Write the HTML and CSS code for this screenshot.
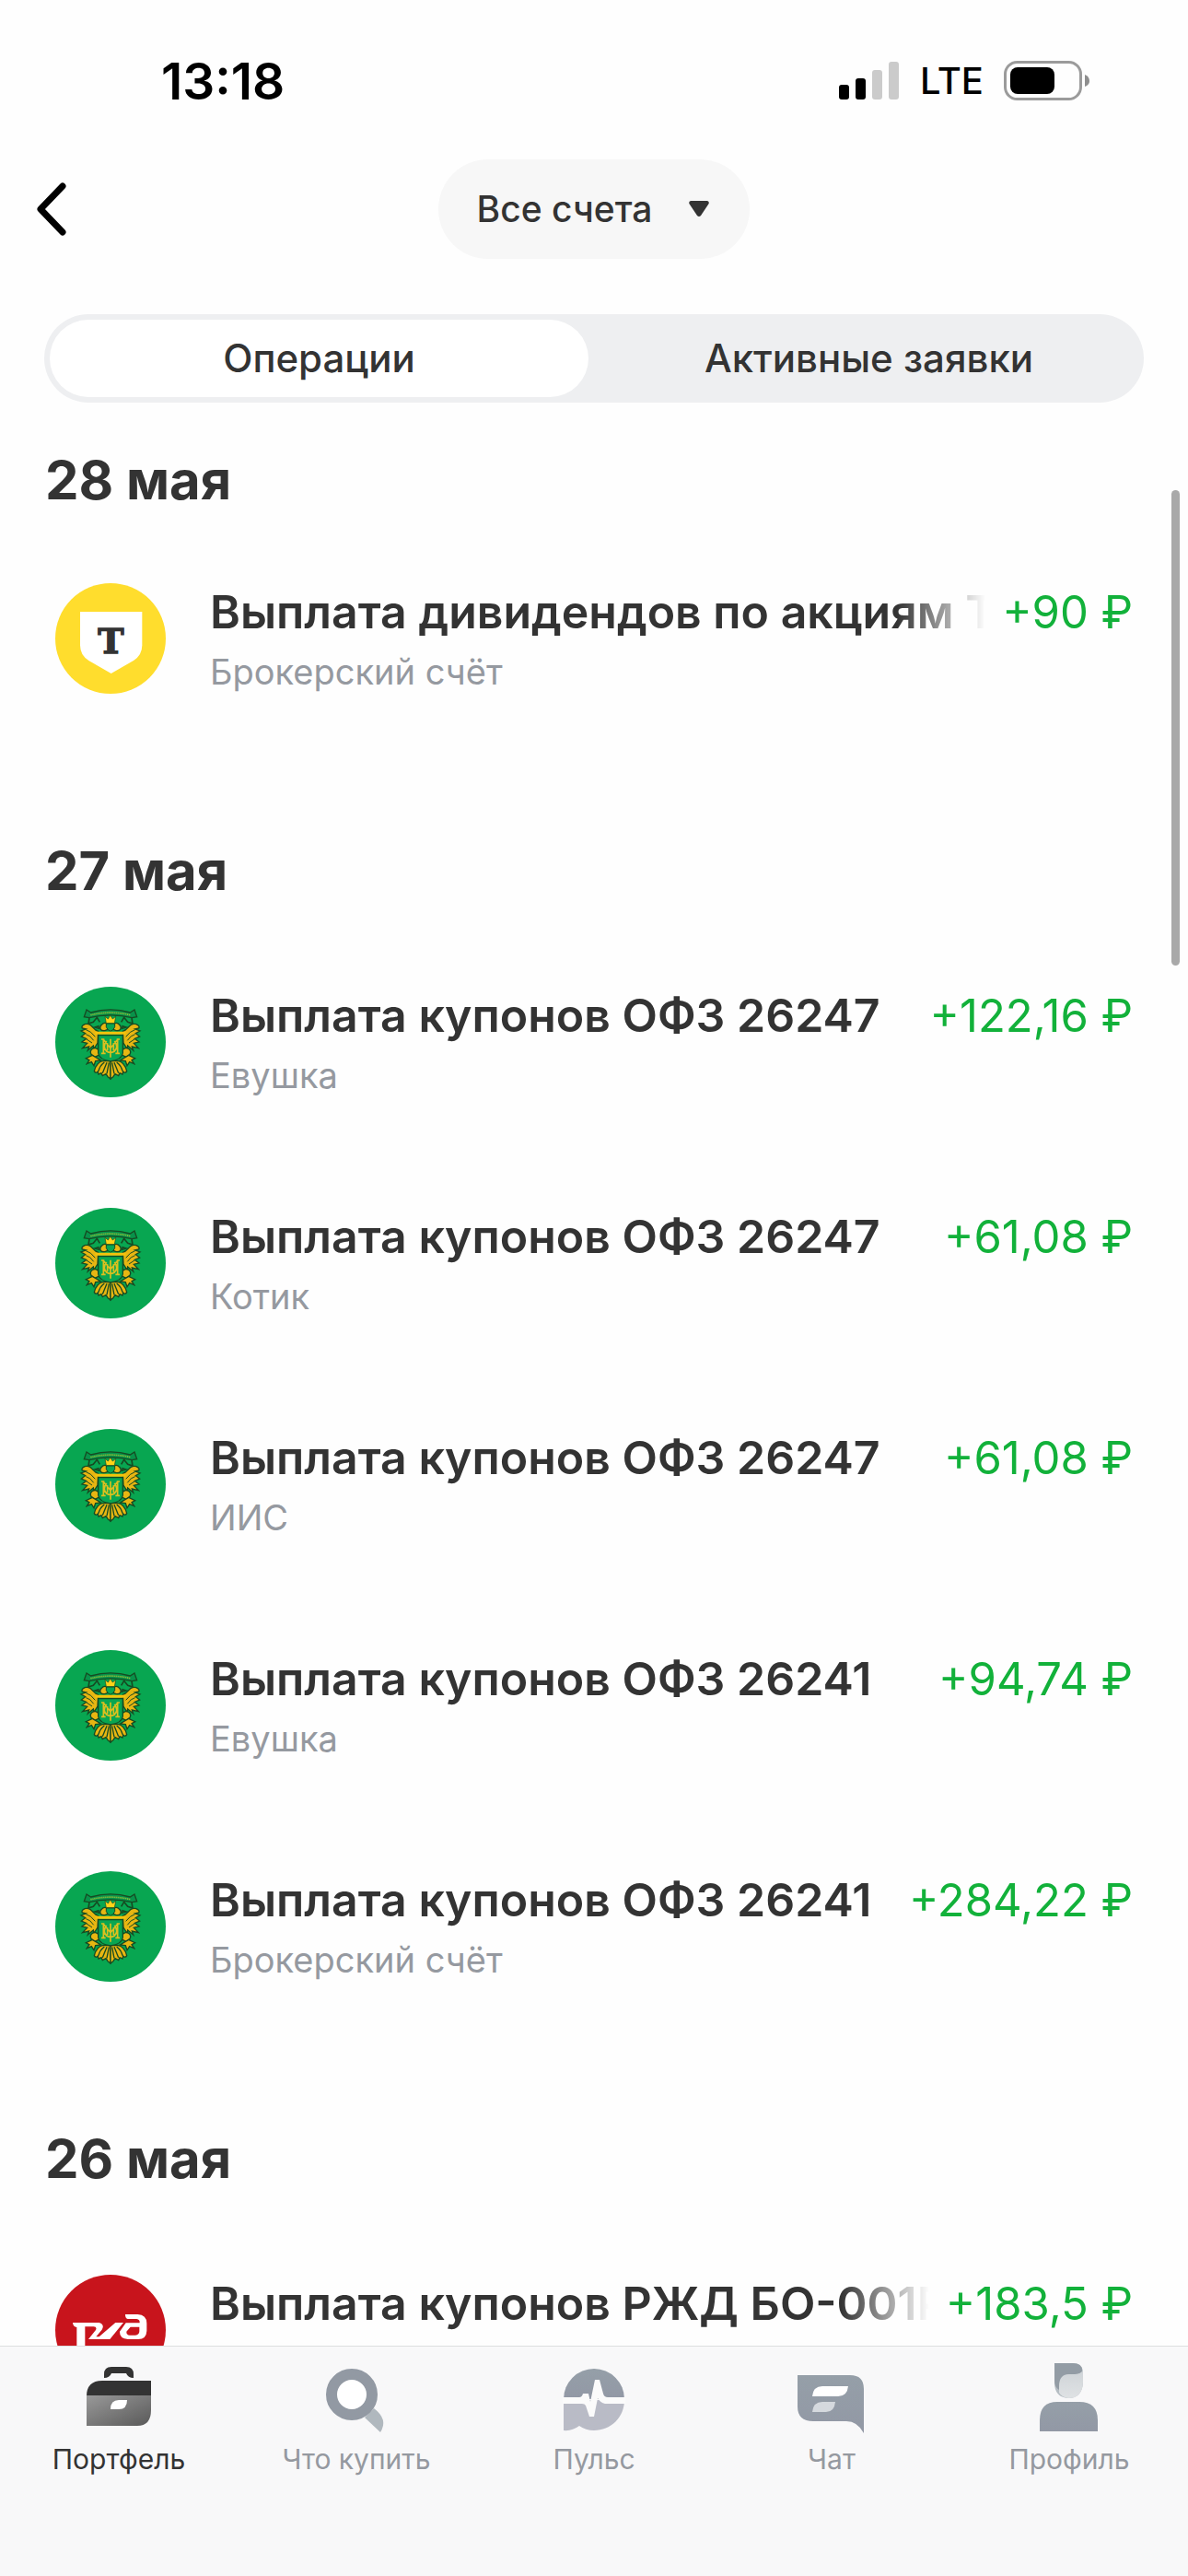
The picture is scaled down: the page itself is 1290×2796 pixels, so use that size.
FILE: index.html
```html
<!DOCTYPE html>
<html lang="ru">
<head>
<meta charset="utf-8">
<meta name="viewport" content="width=device-width">
<title>Операции</title>
<link rel="stylesheet" href="styles.css">
</head>
<body>
<svg class="defs" aria-hidden="true">
  <defs>
    <linearGradient id="case" x1="0" y1="0" x2="1" y2="1"><stop offset="0" stop-color="#999"/><stop offset="1" stop-color="#595959"/></linearGradient>
    <linearGradient id="cool" x1="0" y1="0" x2="0" y2="1"><stop offset="0" stop-color="#959fa8"/><stop offset="1" stop-color="#9298a5"/></linearGradient>
    <linearGradient id="face" x1="0" y1="0" x2="0" y2="1"><stop offset="0" stop-color="#cfd4d8"/><stop offset="1" stop-color="#dfe2e4"/></linearGradient>
    <g id="wing" fill="#e8b612" stroke="#164a22" stroke-width="4">
      <path d="M200 207 C184 204 181 186 168 184 C155 181 143 190 148 197 L160 200 L144 206 L158 214 L145 224 L161 231 L147 242 L164 246 L149 262 L170 257 L166 269 L184 254 L186 264 L198 245 Z"/>
      <path d="M160 202 Q176 206 190 225 M160 217 Q174 220 185 237 M162 233 L180 245" fill="none" stroke-width="3"/>
      <path d="M222 205 C206 207 202 195 211 186 C218 177 228 179 231 187 L238 198 Z"/>
      <path d="M201 190 L188 194 L202 198 Z"/>
      <path d="M191 262 C178 261 171 272 177 282 L188 292 L205 283 C204 270 200 264 191 262 Z"/>
      <path d="M181 285 L160 295 L171 301 L163 313 L178 307 L186 319 L191 304 L209 302 Z"/>
      <path d="M217 303 C204 305 192 316 187 337 C190 343 195 343 199 338 L201 347 L210 343 L214 352 L225 346 L232 356 L240 362 L240 304 Z"/>
      <path d="M220 308 Q205 319 201 337 M228 309 L214 343 M235 309 L228 345" fill="none" stroke-width="4"/>
    </g>
    <symbol id="ofz" viewBox="60 62 360 360">
      <circle cx="240" cy="242" r="180" fill="#08a651"/>
      <path d="M162 137 L176 146 Q240 127 304 146 L318 137 L326 160 L310 163 Q240 146 170 163 L154 160 Z" fill="#08924a" stroke="#164a22" stroke-width="4"/>
      <path d="M175 154 Q240 139 305 154" fill="none" stroke="#8bbb37" stroke-width="5" stroke-dasharray="4 2"/>
      <path d="M171 164 L168 182 L184 177 L196 162 L205 177 M309 164 L312 182 L296 177 L284 162 L275 177" fill="none" stroke="#164a22" stroke-width="5"/>
      <use href="#wing"/>
      <use href="#wing" transform="translate(480 0) scale(-1 1)"/>
      <path d="M226 181 L222 159 L232 167 L239 155 L247 167 L257 159 L253 181 Z" fill="#ffd318" stroke="#164a22" stroke-width="2"/>
      <path d="M226 182 H254 V193 Q250 204 240 207 Q229 203 226 193 Z" fill="#08a651" stroke="#164a22" stroke-width="3"/>
      <path d="M190 213 H290" stroke="#f5c20b" stroke-width="9"/>
      <path d="M200 220 H280 V278 Q276 300 240 305 Q204 300 200 278 Z" fill="#08a651" stroke="#164a22" stroke-width="4"/>
      <path d="M217 234 V278 M263 234 V278 M210 279 H224 M256 279 H270 M210 233 H220 M260 233 H270 M218 235 L240 262 L262 235 M240 232 V292 M227 239 Q212 258 228 273 Q240 280 252 273 Q268 258 253 239 M230 246 V270 M250 246 V270" fill="none" stroke="#dcc01f" stroke-width="5"/>
    </symbol>
  </defs>
</svg>
<div class="app">
  <div class="status">
    <span class="status-time">13:18</span>
    <div class="status-right">
      <svg class="signal" viewBox="0 0 66 42" aria-hidden="true">
        <rect x="0" y="25" width="11" height="16" rx="3"/><rect x="18" y="18" width="11" height="23" rx="3"/>
        <rect x="36" y="9" width="11" height="32" rx="3" fill="#cbcbcb"/><rect x="54" y="0" width="11" height="41" rx="3" fill="#cbcbcb"/>
      </svg>
      <span class="status-net">LTE</span>
      <svg class="battery" viewBox="0 0 94 44" aria-hidden="true">
        <rect x="1.5" y="1.5" width="82" height="40" rx="13" fill="none" stroke="#9b9b9b" stroke-width="3"/>
        <rect x="7" y="7" width="48" height="29" rx="8"/><path d="M88 15 Q93 17 93 22 Q93 26 88 28 Z" fill="#8e8e8e"/>
      </svg>
    </div>
  </div>
  <header class="nav">
    <button class="back" type="button" aria-label="Назад"><svg viewBox="0 0 36 60" aria-hidden="true"><path d="M30 5 L6 30 L30 55" fill="none" stroke="#000" stroke-width="7" stroke-linecap="round" stroke-linejoin="round"/></svg></button>
    <button class="account" type="button">Все счета<svg viewBox="0 0 22 18" aria-hidden="true"><path d="M2 0 H20 Q23 1 21 4 L13 16 Q11 18 9 16 L1 4 Q-1 1 2 0 Z" fill="#333"/></svg></button>
  </header>
  <div class="segments">
    <button class="segment segment-on" type="button">Операции</button>
    <button class="segment" type="button">Активные заявки</button>
  </div>
  <main class="feed">
    <div class="scroll-thumb"></div>
    <section>
      <h2 class="day day-first">28 мая</h2>
      <ul class="rows">
        <li class="row">
          <svg class="logo" viewBox="60 69 360 360" aria-hidden="true"><circle cx="240" cy="249" r="180" fill="#ffdd2d"/><path d="M141 162 H343 V271 Q343 304 315 321 L242 363 L169 321 Q141 304 141 271 Z" fill="#fff"/><text class="logo-letter" x="241" y="298" text-anchor="middle">Т</text></svg>
          <div class="info"><h3 class="title title-fade">Выплата дивидендов по акциям Т</h3><p class="sub">Брокерский счёт</p></div>
          <span class="sum">+90 ₽</span>
        </li>
      </ul>
    </section>
    <section>
      <h2 class="day">27 мая</h2>
      <ul class="rows">
        <li class="row"><svg class="logo" aria-hidden="true"><use href="#ofz"/></svg><div class="info"><h3 class="title">Выплата купонов ОФЗ 26247</h3><p class="sub">Евушка</p></div><span class="sum">+122,16 ₽</span></li>
        <li class="row"><svg class="logo" aria-hidden="true"><use href="#ofz"/></svg><div class="info"><h3 class="title">Выплата купонов ОФЗ 26247</h3><p class="sub">Котик</p></div><span class="sum">+61,08 ₽</span></li>
        <li class="row"><svg class="logo" aria-hidden="true"><use href="#ofz"/></svg><div class="info"><h3 class="title">Выплата купонов ОФЗ 26247</h3><p class="sub">ИИС</p></div><span class="sum">+61,08 ₽</span></li>
        <li class="row"><svg class="logo" aria-hidden="true"><use href="#ofz"/></svg><div class="info"><h3 class="title">Выплата купонов ОФЗ 26241</h3><p class="sub">Евушка</p></div><span class="sum">+94,74 ₽</span></li>
        <li class="row"><svg class="logo" aria-hidden="true"><use href="#ofz"/></svg><div class="info"><h3 class="title">Выплата купонов ОФЗ 26241</h3><p class="sub">Брокерский счёт</p></div><span class="sum">+284,22 ₽</span></li>
      </ul>
    </section>
    <section>
      <h2 class="day">26 мая</h2>
      <ul class="rows">
        <li class="row">
          <svg class="logo" viewBox="60 87 360 360" aria-hidden="true"><circle cx="240" cy="267" r="180" fill="#c8141c"/><g fill="#fff" fill-rule="evenodd"><path d="M117 243 H203 Q222 250 212 266 L193 289 H203 L256 243 H282 L238 297 H168 L192 267 Q197 256 185 256 H157 V335 H130 V258 Q118 257 117 243 Z"/><path d="M288 216 H328 Q358 218 358 245 V270 Q357 297 330 297 H297 Q269 295 270 272 L290 244 H335 Q336 232 325 231 H296 Q288 229 288 216 Z M305 257 L292 272 Q291 283 303 284 H321 Q334 283 334 271 V257 Z"/></g></svg>
          <div class="info"><h3 class="title title-fade">Выплата купонов РЖД БО-001P</h3></div>
          <span class="sum">+183,5 ₽</span>
        </li>
      </ul>
    </section>
  </main>
  <nav class="tabs">
    <a class="tab tab-on" href="#portfolio">
      <svg viewBox="0 0 84 84" aria-hidden="true"><path d="M26 21 V17 Q26 9 34 9 H50 Q58 9 58 17 V21 Q52 21 50 16 H34 Q32 21 26 21 Z" fill="#333"/><path d="M7 41 Q7 24 24 24 H77 V41 Z" fill="#333"/><path d="M7 40 H77 V56 Q77 73 62 73 H7 Z" fill="url(#case)"/><path d="M33 55 Q33 45 42 45 H51 Q51 55 42 55 Z" fill="#fff"/></svg>
      <span>Портфель</span></a>
    <a class="tab" href="#invest">
      <svg viewBox="0 0 84 84" aria-hidden="true"><path d="M51 64 L61 54 Q77 66 68 80 Z" fill="#b0b8be"/><circle cx="37" cy="39" r="22" fill="#fff" stroke="#9299a3" stroke-width="12"/></svg>
      <span>Что купить</span></a>
    <a class="tab" href="#pulse">
      <svg viewBox="0 0 84 84" aria-hidden="true"><path d="M9 44 A33 33 0 0 1 75 44 Z" fill="url(#cool)"/><path d="M9 45 H75 C75 64 60 78 42 78 Q33 78 26 73 Q18 79 9 78 Z" fill="#b9bbc6"/><path d="M8 42 H26 Q29 42 30 38 H36 L38 47 L43 23 H48 L52 38 Q53 42 57 42 H76 V49 H54 Q49 48 46 43 L42 63 H37 L33 51 Q32 49 29 49 H8 Z" fill="#fbfbfb"/></svg>
      <span>Пульс</span></a>
    <a class="tab" href="#chat">
      <svg viewBox="0 0 84 84" aria-hidden="true"><path d="M5 18 H62 Q77 18 77 33 V81 Q70 68 58 68 H22 Q5 68 5 52 Z" fill="url(#cool)"/><path d="M21 41 Q22 30 32 30 H60 Q59 41 49 41 Z" fill="#fff"/><path d="M21 58 Q22 47 32 47 H46 Q45 58 36 58 Z" fill="#d5d9de"/></svg>
      <span>Чат</span></a>
    <a class="tab" href="#profile">
      <svg viewBox="0 0 84 84" aria-hidden="true"><path d="M26 5 H46 Q57 5 57 16 V26 Q56 43 41 43 Q26 42 26 26 Z" fill="#b5bdc3"/><path d="M26 5 H46 Q56 5 56 13 Q56 17 48 17 H42 Q31 18 31 34 Q26 31 26 24 Z" fill="#939ca5"/><path d="M31 37 V30 Q31 17 42 17 H48 Q54 17 57 13 V26 Q56 43 41 43 Q34 42 31 37 Z" fill="url(#face)"/><path d="M10 79 V67 Q10 47 29 47 H53 Q73 47 73 67 V79 Z" fill="url(#cool)"/></svg>
      <span>Профиль</span></a>
  </nav>
</div>
</body>
</html>
```
FILE: styles.css
```css
* { box-sizing: border-box; }

body {
  margin: 0;
  background: #fefefe;
  color: #333;
  font-family: Inter, "Noto Sans", sans-serif;
}

h2, h3, p, ul { margin: 0; padding: 0; }
ul { list-style: none; }
button { border: 0; padding: 0; font: inherit; color: inherit; background: none; }
svg { display: block; flex: none; }

.defs { position: absolute; width: 0; height: 0; }

.app {
  display: flex;
  flex-direction: column;
  height: 100vh;
}

/* Status bar */
.status {
  display: flex;
  justify-content: space-between;
  align-items: center;
  padding: 54px 106px 51px 175px;
  line-height: 68px;
  color: #000;
}
.status-time { font-size: 55px; font-weight: 600; }
.status-right { display: flex; align-items: center; gap: 22px; }
.status-net { font-size: 40px; font-weight: 500; }
.signal { width: 66px; height: 42px; }
.battery { width: 94px; height: 44px; }

/* Account picker */
.nav {
  display: grid;
  grid-template-columns: 1fr auto 1fr;
  align-items: center;
  padding: 0 38px;
}
.back { justify-self: start; }
.back svg { width: 36px; height: 60px; }
.account {
  display: flex;
  align-items: center;
  gap: 40px;
  padding: 0 44px 0 42px;
  border-radius: 54px;
  background: #f7f7f7;
  font-size: 39px;
  font-weight: 500;
  line-height: 108px;
}
.account svg { width: 22px; height: 18px; }

/* Segmented control */
.segments {
  display: grid;
  grid-template-columns: 1fr 1fr;
  gap: 12px;
  margin: 60px 48px 0;
  padding: 6px;
  border-radius: 48px;
  background: #eeeff1;
}
.segment {
  border-radius: 42px;
  font-size: 42px;
  font-weight: 500;
  line-height: 84px;
}
.segment-on { background: #fff; }

/* Operations */
.feed {
  position: relative;
  flex: 1;
  min-height: 0;
  overflow: hidden;
}
.scroll-thumb {
  position: absolute;
  top: 95px;
  right: 9px;
  width: 9px;
  height: 516px;
  border-radius: 5px;
  background: #a9a9a9;
}
.day {
  padding: 98px 49px 32px;
  font-size: 58px;
  font-weight: 700;
  line-height: 68px;
}
.day-first { padding: 50px 49px 18px; }
.row {
  display: flex;
  align-items: flex-start;
  padding: 60px;
}
.logo { width: 120px; height: 120px; }
.logo-letter {
  font: bold 114px "DejaVu Serif", serif;
  fill: #333;
  stroke: #333;
  stroke-width: 4px;
}
.info {
  flex: 1;
  min-width: 0;
  margin: 0 18px 0 48px;
}
.title {
  overflow: hidden;
  font-size: 50px;
  font-weight: 600;
  line-height: 62px;
  white-space: nowrap;
}
.title-fade {
  -webkit-mask-image: linear-gradient(to left, transparent, #000 96px);
  mask-image: linear-gradient(to left, transparent, #000 96px);
}
.sub {
  margin-top: 10px;
  color: #9599a0;
  font-size: 38px;
  line-height: 48px;
}
.sum {
  color: #12b13a;
  font-size: 49px;
  line-height: 63px;
  white-space: nowrap;
}

/* Tab bar */
.tabs {
  display: grid;
  grid-template-columns: repeat(5, 1fr);
  border-top: 1px solid #dedfe0;
  background: #f8f8f9;
  padding: 13px 0 102px;
}
.tab {
  display: flex;
  flex-direction: column;
  align-items: center;
  color: #9599a0;
  font-size: 30px;
  line-height: 50px;
  text-decoration: none;
}
.tab svg { width: 84px; height: 84px; }
.tab-on { color: #333; }
```
